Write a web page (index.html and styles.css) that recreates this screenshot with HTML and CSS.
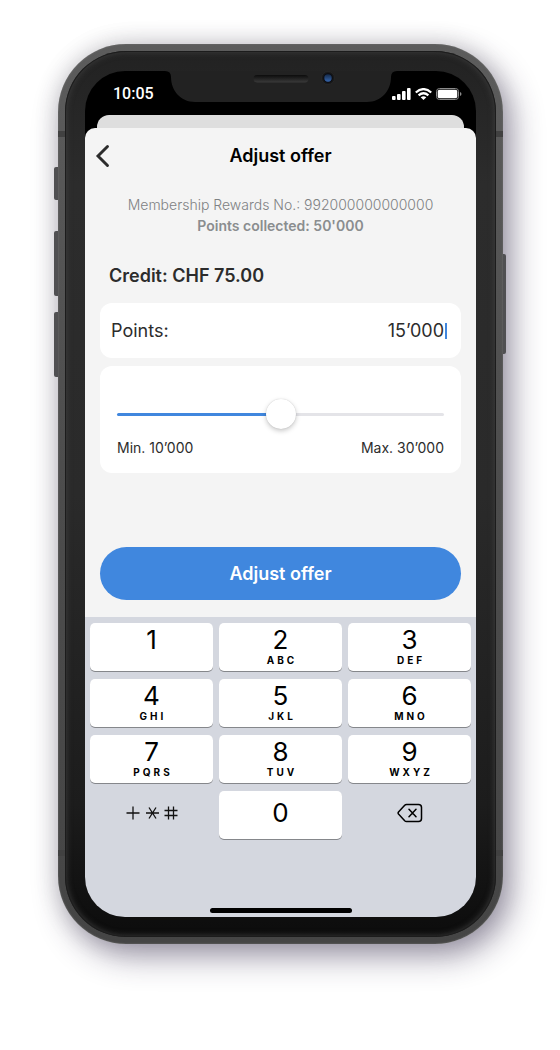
FILE: index.html
```html
<!DOCTYPE html>
<html lang="en">
<head>
<meta charset="utf-8">
<meta name="viewport" content="width=device-width, initial-scale=1">
<title>Adjust offer</title>
<link rel="stylesheet" href="styles.css">
</head>
<body>
<main class="stage">
  <div class="phone">
    <span class="side side-mute"></span>
    <span class="side side-up"></span>
    <span class="side side-down"></span>
    <span class="side side-power"></span>
    <span class="band band-top"></span>
    <span class="band band-bottom"></span>
    <div class="bezel">
      <div class="screen">
        <div class="status">
          <time class="clock">10:05</time>
          <svg class="notch" width="232" height="40" viewBox="0 -9 232 40" aria-hidden="true">
            <defs>
              <linearGradient id="slot" x1="0" y1="0" x2="0" y2="1"><stop offset="0" stop-color="#0c0c0c"/><stop offset="1" stop-color="#3a3a3a"/></linearGradient>
              <linearGradient id="lens" x1="0" y1="0" x2="0" y2="1"><stop offset="0" stop-color="#152947"/><stop offset="1" stop-color="#3666ad"/></linearGradient>
            </defs>
            <path d="M0-1V0Q6 0 6 6C6 20 16 31 30 31H202C216 31 226 20 226 6Q226 0 232 0V-1Z" fill="#222"/>
            <rect x="88.500" y="4" width="55" height="7.500" rx="3.700" fill="url(#slot)"/>
            <circle cx="163" cy="7" r="6.500" fill="#191919" stroke="#2d2d2d" stroke-width=".6"/>
            <circle cx="163" cy="7" r="4.800" fill="#0b0d14"/>
            <circle cx="163" cy="7" r="3.700" fill="url(#lens)"/>
          </svg>
          <div class="status-icons">
            <svg width="19" height="12" viewBox="0 0 19 12" fill="#fff" aria-hidden="true">
              <rect x="0" y="8" width="3.600" height="4" rx="1"/><rect x="5" y="6" width="3.600" height="6" rx="1"/><rect x="10" y="3" width="3.600" height="9" rx="1"/><rect x="15" y="0" width="3.600" height="12" rx="1"/>
            </svg>
            <svg width="17" height="12" viewBox="0 0 17 12" fill="none" stroke="#fff" stroke-width="2.300" aria-hidden="true">
              <path d="M.8 4.500Q8.500-2.200 16.200 4.500M3.600 7.300Q8.500 3.100 13.400 7.300"/>
              <path d="M5.700 9.300Q8.500 7.200 11.300 9.300L8.500 12Z" fill="#fff" stroke="none"/>
            </svg>
            <svg width="26" height="12" viewBox="0 0 26 12" aria-hidden="true">
              <rect x=".5" y=".5" width="22" height="11" rx="3" fill="none" stroke="#8b8b8b"/>
              <rect x="1.700" y="1.700" width="19.600" height="8.600" rx="1.800" fill="#fff"/>
              <path d="M24 4Q25.500 4.600 25.500 6T24 8Z" fill="#8b8b8b"/>
            </svg>
          </div>
        </div>
        <div class="sheet-behind"></div>
        <form class="sheet">
          <header class="header">
            <button class="back" type="button" aria-label="Back">
              <svg width="15" height="24" viewBox="0 0 15 24" fill="none" stroke="#2c2c2c" stroke-width="2.900" stroke-linecap="round" stroke-linejoin="miter"><path d="M12.500 2.500 3 12 12.500 21.500"/></svg>
            </button>
            <h1 class="title">Adjust offer</h1>
          </header>
          <p class="member">Membership Rewards No.: 992000000000000<br><strong class="collected">Points collected: 50'000</strong></p>
          <h2 class="credit">Credit: CHF 75.00</h2>
          <div class="card points">
            <label class="points-label" for="points">Points:</label>
            <input class="points-input" id="points" type="text" inputmode="numeric" value="15’000">
            <span class="caret"></span>
          </div>
          <div class="card range">
            <input class="slider" type="range" min="10000" max="30000" value="20000" aria-label="Points to redeem">
            <div class="limits"><span>Min. 10’000</span><span>Max. 30’000</span></div>
          </div>
          <button class="submit" type="button">Adjust offer</button>
        </form>
        <div class="keyboard">
          <div class="keys">
            <button class="key" type="button">1</button>
            <button class="key" type="button">2<small class="letters">ABC</small></button>
            <button class="key" type="button">3<small class="letters">DEF</small></button>
            <button class="key" type="button">4<small class="letters">GHI</small></button>
            <button class="key" type="button">5<small class="letters">JKL</small></button>
            <button class="key" type="button">6<small class="letters">MNO</small></button>
            <button class="key" type="button">7<small class="letters">PQRS</small></button>
            <button class="key" type="button">8<small class="letters">TUV</small></button>
            <button class="key" type="button">9<small class="letters">WXYZ</small></button>
            <button class="key key-plain" type="button" aria-label="Symbols">
              <svg width="52" height="14" viewBox="0 0 52 14" fill="none" stroke="#111" stroke-width="1.300"><path d="M.5 7H13.500M7 .5V13.500M20 7H33M23 1.500 30 12.500M30 1.500 23 12.500M38.500 4.500H51.500M38.500 9.500H51.500M42.500.5V13.500M47.500.5V13.500"/></svg>
            </button>
            <button class="key key-zero" type="button">0</button>
            <button class="key key-plain" type="button" aria-label="Delete">
              <svg width="26" height="20" viewBox="0 0 26 20" fill="none" stroke="#000" stroke-width="1.500" stroke-linejoin="round" stroke-linecap="round"><path d="M9.500 1.500H21.500Q24.500 1.500 24.500 4.500V15.500Q24.500 18.500 21.500 18.500H9.500Q8.500 18.500 7.700 17.700L1.500 11Q.7 10 1.500 9L7.700 2.300Q8.500 1.500 9.500 1.500ZM12 6.200 19 13.800M19 6.200 12 13.800"/></svg>
            </button>
          </div>
          <div class="home"></div>
        </div>
      </div>
    </div>
  </div>
</main>
</body>
</html>
```
FILE: styles.css
```css
* { box-sizing: border-box; }

body {
  margin: 0;
  background: #fff;
  color: #2c2c2c;
  font-family: Inter, "Liberation Sans", sans-serif;
}

h1, h2, p { margin: 0; }

button, input {
  margin: 0;
  padding: 0;
  border: 0;
  background: none;
  color: inherit;
  font: inherit;
}

.stage {
  display: flex;
  justify-content: center;
  padding: 44px 57px 100px 58px;
}

.phone {
  position: relative;
  width: 100%;
  max-width: 445px;
  padding: 7px;
  border-radius: 68px;
  background: linear-gradient(#5c5c5c, #4c4c4c 50%, #454545);
  box-shadow: inset 0 0 2px #777, 8px 12px 32px rgba(50, 40, 75, .48), 0 0 24px rgba(0, 0, 0, .14);
}

.bezel {
  position: relative;
  padding: 20px;
  border-radius: 61px;
  background: linear-gradient(#222, #2c2c2c 15%, #2a2a2a 50%, #1c1c1c 85%, #0c0c0c);
  box-shadow: inset 0 0 0 1px #1c1c1c, inset 0 0 6px 1px #3e3e3e;
}

.screen {
  overflow: hidden;
  border-radius: 40px;
  background: #000;
}

/* Hardware buttons and antenna bands on the frame */
.side {
  position: absolute;
  left: -4px;
  width: 4px;
  border-radius: 2px 0 0 2px;
  background: #505052;
}
.side-mute { top: 123px; height: 33px; }
.side-up { top: 187px; height: 65px; }
.side-down { top: 268px; height: 65px; }
.side-power {
  top: 210px;
  right: -3px;
  left: auto;
  width: 3px;
  height: 100px;
  border-radius: 0 2px 2px 0;
}
.band {
  position: absolute;
  right: 0;
  left: 0;
  height: 6px;
  background: #414141;
}
.band-top { top: 87px; }
.band-bottom { bottom: 88px; }

.status {
  position: relative;
  display: flex;
  align-items: center;
  justify-content: space-between;
  height: 44px;
  padding: 2px 14px 0 28px;
  color: #fff;
}
.clock { font: 500 16px/20px Roboto, sans-serif; }
.notch {
  position: absolute;
  top: -9px;
  left: 50%;
  transform: translateX(-50%);
}
.status-icons { display: flex; gap: 4px; }

.sheet-behind {
  height: 13px;
  margin: 0 12px;
  border-radius: 12px 12px 0 0;
  background: #dedede;
}

.sheet {
  display: flex;
  flex-direction: column;
  padding: 0 15px 17px;
  border-radius: 10px 10px 0 0;
  background: #f4f4f4;
}

.header {
  display: grid;
  grid-template-columns: 24px 1fr 24px;
  align-items: center;
  height: 55px;
  margin: 0 -5px;
}
.back { display: flex; }
.title {
  color: #000;
  font-size: 18px;
  font-weight: 600;
  line-height: 24px;
  text-align: center;
}

.member {
  margin-top: 11px;
  color: #7e8183;
  font-size: 14px;
  font-weight: 300;
  line-height: 21px;
  text-align: center;
}
.collected {
  color: #8a8d8f;
  font-weight: 600;
}

.credit {
  margin: 28px 9px 15px;
  font-size: 18px;
  font-weight: 600;
  line-height: 24px;
}

.card {
  border-radius: 12px;
  background: #fff;
}
.points {
  display: flex;
  align-items: center;
  height: 55px;
  padding: 0 14px 0 11px;
  font-size: 18px;
}
.points-input {
  flex: 1;
  min-width: 0;
  text-align: right;
  outline: 0;
}
.caret {
  width: 2px;
  height: 16px;
  margin-left: 1px;
  background: #4087de;
}

.range {
  margin-top: 8px;
  padding: 33px 17px 15px;
}
.slider {
  display: block;
  width: 100%;
  height: 30px;
  appearance: none;
}
.slider::-webkit-slider-runnable-track {
  height: 3px;
  border-radius: 2px;
  background: linear-gradient(90deg, #4087de 50%, #e4e4e8 50%);
}
.slider::-webkit-slider-thumb {
  width: 30px;
  height: 30px;
  margin-top: -14px;
  border-radius: 50%;
  background: #fff;
  box-shadow: 0 2px 5px rgba(0, 0, 0, .22), 0 0 1px rgba(0, 0, 0, .2);
  appearance: none;
}
.limits {
  display: flex;
  justify-content: space-between;
  margin-top: 8px;
  font-size: 14px;
  line-height: 21px;
}

.submit {
  height: 53px;
  margin-top: 74px;
  border-radius: 27px;
  background: #4087de;
  color: #fff;
  font-size: 18px;
  font-weight: 600;
}

.keyboard {
  padding: 6px 5px 4px;
  background: #d4d7df;
}
.keys {
  display: grid;
  grid-template-columns: repeat(3, 1fr);
  grid-auto-rows: 49px;
  gap: 7px 6px;
}
.key {
  display: flex;
  flex-direction: column;
  align-items: center;
  height: 48px;
  padding-top: 2px;
  border-radius: 5px;
  background: #fff;
  box-shadow: 0 1px 0 #85878b;
  color: #000;
  font-size: 26px;
  line-height: 30px;
}
.letters {
  padding-left: 3px;
  font-size: 10px;
  font-weight: 700;
  letter-spacing: 3px;
  line-height: 10px;
}
.key-zero, .key-plain {
  justify-content: center;
  padding: 0 0 4px;
}
.key-plain {
  background: none;
  box-shadow: none;
}
.home {
  width: 142px;
  height: 5px;
  margin: 68px auto 0;
  border-radius: 3px;
  background: #000;
}
```
